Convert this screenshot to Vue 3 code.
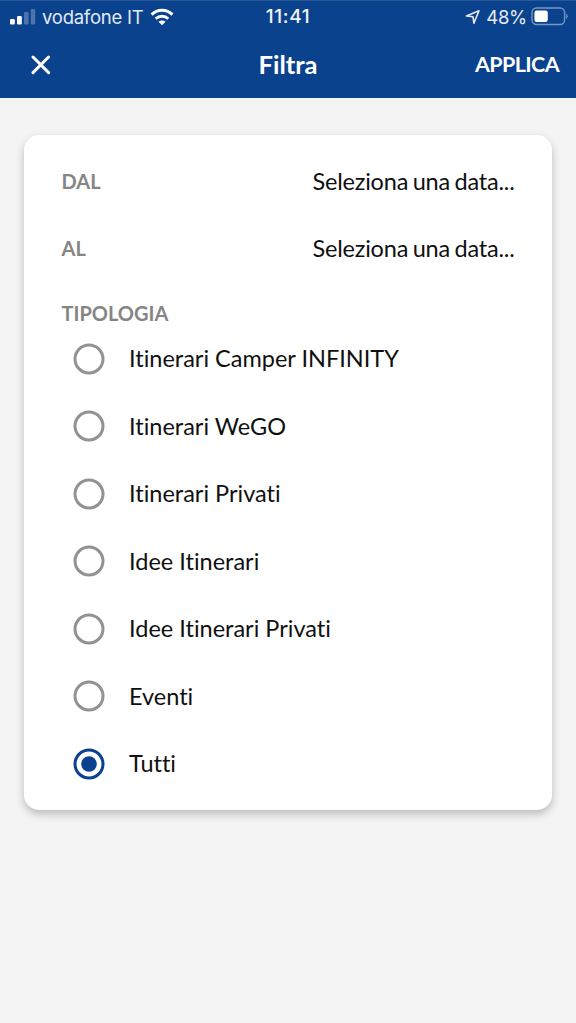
<script setup>
import { ref } from 'vue'

const dates = ['DAL', 'AL']
const types = [
  'Itinerari Camper INFINITY',
  'Itinerari WeGO',
  'Itinerari Privati',
  'Idee Itinerari',
  'Idee Itinerari Privati',
  'Eventi',
  'Tutti',
]
const selected = ref('Tutti')
</script>

<template>
  <div class="screen">
    <header class="top">
      <div class="status">
        <div class="side">
          <svg class="signal" width="26" height="17" viewBox="0 0 26 17" fill="#fff">
            <rect x="0" y="11" width="4.8" height="5.5" rx="1.2" />
            <rect x="7" y="8" width="4.8" height="8.5" rx="1.2" />
            <rect x="14" y="4" width="4.6" height="12.5" rx="1.2" opacity=".27" />
            <rect x="20.8" y="1" width="4.4" height="15.5" rx="1.2" opacity=".27" />
          </svg>
          <span class="carrier">vodafone IT</span>
          <svg class="wifi" width="24" height="18" viewBox="0 0 24 18">
            <path d="M1.6 6.6C7.4.8 16.6.8 22.4 6.6" fill="none" stroke="#fff" stroke-width="3" />
            <path d="M5.7 10.8C9.3 7.4 14.7 7.4 18.3 10.8" fill="none" stroke="#fff" stroke-width="2.8" />
            <path d="M8.5 13.7C10.6 12 13.4 12 15.5 13.7L12 17.3Z" fill="#fff" />
          </svg>
        </div>
        <span class="time">11:41</span>
        <div class="side right">
          <svg class="location" width="16" height="16" viewBox="0 0 16 16">
            <path d="M1.4 7L14 1.8 8.9 14.2 8 7.8Z" fill="none" stroke="#e4ebf5" stroke-width="1.6" stroke-linejoin="round" />
          </svg>
          <span class="percent">48%</span>
          <svg class="battery" width="38" height="19" viewBox="0 0 38 19">
            <rect x="1" y="1" width="32.6" height="16.5" rx="4.5" fill="none" stroke="#7896c3" stroke-width="1.4" />
            <rect x="3.4" y="3.5" width="13.4" height="11.5" rx="2.2" fill="#fff" />
            <path d="M35.2 6.5Q38.2 9.2 35.2 12Z" fill="#7896c3" />
          </svg>
        </div>
      </div>
      <div class="nav">
        <button class="close" aria-label="Chiudi">
          <svg width="20" height="20" viewBox="0 0 20 20">
            <path d="M2 2L17.6 17.6M17.6 2L2 17.6" stroke="#fff" stroke-width="3" stroke-linecap="round" />
          </svg>
        </button>
        <h1 class="title">Filtra</h1>
        <button class="apply">APPLICA</button>
      </div>
    </header>

    <main class="card">
      <div v-for="d in dates" :key="d" class="date">
        <span class="label">{{ d }}</span>
        <span class="value">Seleziona una data...</span>
      </div>
      <div class="label heading">TIPOLOGIA</div>
      <div v-for="t in types" :key="t" class="option" @click="selected = t">
        <svg class="radio" :class="{ on: selected === t }" width="32" height="32" viewBox="0 0 32 32">
          <circle class="ring" cx="16" cy="16" r="14" />
          <circle v-if="selected === t" class="dot" cx="16" cy="16" r="7.8" />
        </svg>
        <span>{{ t }}</span>
      </div>
    </main>
  </div>
</template>

<style>
body {
  background: #f4f4f4;
}
</style>

<style scoped>
.screen {
  box-sizing: border-box;
  height: 1023px;
  background: #f4f4f4;
  font-family: Lato, sans-serif;
  font-variant-ligatures: none;
  color: #101010;
  overflow: hidden;
}
.top {
  box-sizing: border-box;
  height: 98px;
  background: #0a428e;
  border-top: 1px solid #2a5998;
  color: #fff;
}
.status {
  display: grid;
  grid-template-columns: 1fr auto 1fr;
  height: 29px;
  align-items: center;
  font-family: Inter, sans-serif;
  font-size: 18.5px;
  line-height: 30px;
  color: #e4ebf5;
}
.side {
  display: flex;
  align-items: center;
  padding-left: 10px;
}
.right {
  justify-content: flex-end;
  padding: 0 7.5px 0 0;
}
.carrier {
  margin: 0 7px 0 6px;
  letter-spacing: -0.25px;
}
.signal,
.wifi,
.location {
  margin-bottom: 1px;
}
.battery {
  margin-bottom: 2px;
}
.time {
  font-weight: 500;
  font-size: 19px;
  line-height: 32px;
  letter-spacing: 0.6px;
  color: #f2f5fa;
}
.percent {
  margin: 0 3.5px 0 5px;
  letter-spacing: -0.3px;
}
.nav {
  display: grid;
  grid-template-columns: 1fr auto 1fr;
  align-items: center;
  height: 68px;
  padding: 0 16px;
}
button {
  border: 0;
  padding: 0;
  background: none;
  color: inherit;
  font-family: inherit;
}
.close {
  display: flex;
  justify-self: start;
  margin: 2px 0 0 15px;
}
.title {
  margin: 0;
  font-size: 25.5px;
  font-weight: 700;
}
.apply {
  justify-self: end;
  margin-right: 1px;
  font-size: 21.5px;
  font-weight: 700;
  letter-spacing: -0.6px;
}
.card {
  box-sizing: border-box;
  width: 527.5px;
  height: 675px;
  margin: 37px 0 0 24px;
  padding: 12px 37px 0;
  border-radius: 15px;
  background: #fff;
  box-shadow: 0 4px 9px rgba(0, 0, 0, 0.24);
}
.date {
  display: flex;
  justify-content: space-between;
  align-items: center;
  height: 67.5px;
}
.value,
.option {
  font-size: 23.5px;
}
.value {
  letter-spacing: -0.2px;
  word-spacing: -1.3px;
}
.label {
  margin-left: 0.5px;
  font-size: 20px;
  font-weight: 700;
  color: #858585;
}
.heading {
  height: 42.5px;
  line-height: 62px;
}
.option {
  display: flex;
  align-items: center;
  height: 67.5px;
  padding-left: 12px;
  gap: 24px;
}
.radio {
  margin-top: 1px;
}
.ring {
  fill: none;
  stroke: #929292;
  stroke-width: 3;
}
.on .ring {
  stroke: #0a428e;
}
.dot {
  fill: #0a428e;
}
</style>
